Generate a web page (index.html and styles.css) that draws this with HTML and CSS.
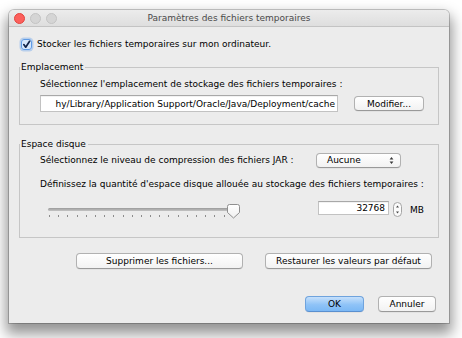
FILE: index.html
```html
<!DOCTYPE html>
<html lang="fr">
<head>
	<meta charset="utf-8">
	<title>Paramètres des fichiers temporaires</title>
	<link rel="stylesheet" href="styles.css">
</head>
<body>

	<div class="window">
		<div class="titlebar">
			<div class="lights">
				<span class="light close"></span>
				<span class="light"></span>
				<span class="light"></span>
			</div>
			<div class="title">Paramètres des fichiers temporaires</div>
			<div></div>
		</div>

		<div class="content">
			<label class="check-row">
				<span class="checkbox">
					<svg width="11" height="11" viewBox="0 0 11 11">
						<rect x="0.5" y="0.5" width="10" height="10" rx="2.5" fill="#d6e7fc" stroke="#5f9be6"/>
						<path d="M2.8 5.6 L4.7 8.2 L8.6 2.3" fill="none" stroke="#12244a" stroke-width="1.7" stroke-linecap="round" stroke-linejoin="round"/>
					</svg>
				</span>
				Stocker les fichiers temporaires sur mon ordinateur.
			</label>

			<fieldset class="group group-location">
				<legend>Emplacement</legend>
				<div class="group-body">
					<div class="text-line">Sélectionnez l'emplacement de stockage des fichiers temporaires :</div>
					<div class="path-row">
						<div class="field path"><span>hy/Library/Application Support/Oracle/Java/Deployment/cache</span></div>
						<div class="btn btn-modify">Modifier...</div>
					</div>
				</div>
			</fieldset>

			<fieldset class="group group-disk">
				<legend>Espace disque</legend>
				<div class="group-body">
					<div class="compress-row">
						<span>Sélectionnez le niveau de compression des fichiers JAR :</span>
						<div class="btn popup">
							<span class="popup-label">Aucune</span>
							<svg width="5" height="9" viewBox="0 0 5 9">
								<path d="M0.6 3.4 L2.5 1 L4.4 3.4 Z M0.6 5.6 L2.5 8 L4.4 5.6 Z" fill="#3a3a3a"/>
							</svg>
						</div>
					</div>
					<div class="text-line space-line">Définissez la quantité d'espace disque allouée au stockage des fichiers temporaires :</div>
					<div class="slider-row">
						<div class="slider">
							<div class="track"></div>
							<div class="ticks">
								<i></i><i></i><i></i><i></i><i></i><i></i><i></i>
								<i></i><i></i><i></i><i></i><i></i><i></i><i></i>
								<i></i><i></i><i></i><i></i><i></i><i></i><i></i>
							</div>
							<svg class="thumb" width="13" height="15" viewBox="0 0 13 15">
								<defs>
									<linearGradient id="thumbfill" x1="0" y1="0" x2="0" y2="1">
										<stop offset="0" stop-color="#ffffff"/>
										<stop offset="1" stop-color="#f0f0f0"/>
									</linearGradient>
								</defs>
								<path d="M2.5 0.5 H10.5 Q12.5 0.5 12.5 2.5 V8.5 L6.5 14 L0.5 8.5 V2.5 Q0.5 0.5 2.5 0.5 Z" fill="url(#thumbfill)" stroke="#8f8f8f"/>
							</svg>
						</div>
						<div class="field number">32768</div>
						<div class="stepper">
							<svg width="9" height="15" viewBox="0 0 9 15">
								<rect x="0.5" y="0.5" width="8" height="14" rx="4" fill="#fbfbfb" stroke="#a4a4a4"/>
								<path d="M3 5.6 L4.5 3.6 L6 5.6 Z M3 9.4 L4.5 11.4 L6 9.4 Z" fill="#4a4a4a"/>
							</svg>
						</div>
						<span class="unit">MB</span>
					</div>
				</div>
			</fieldset>

			<div class="actions">
				<div class="btn btn-wide">Supprimer les fichiers...</div>
				<div class="btn btn-wide">Restaurer les valeurs par défaut</div>
			</div>

			<div class="dialog-buttons">
				<div class="btn btn-ok">OK</div>
				<div class="btn btn-cancel">Annuler</div>
			</div>
		</div>
	</div>

</body>
</html>
```

FILE: styles.css
```css
html {
	background: #ffffff;
}

body {
	margin: 0;
	min-height: 338px;
	font-family: "DejaVu Sans", sans-serif;
	font-size: 9px;
	color: #000000;
}

.window {
	margin: 10px 0 0 9px;
	width: 440px;
	height: 313px;
	background: #ececec;
	border-radius: 5px 5px 0 0;
	box-shadow: 0 0 0 1px rgba(0, 0, 0, 0.2), 0 8px 14px 3px rgba(0, 0, 0, 0.42);
	overflow: hidden;
}

.titlebar {
	height: 16px;
	padding: 0 5px;
	display: grid;
	grid-template-columns: 1fr auto 1fr;
	align-items: center;
	background: linear-gradient(#ececec, #dedede);
	border-bottom: 1px solid #c3c3c3;
}

.lights {
	display: flex;
	gap: 5px;
}

.light {
	width: 9px;
	height: 9px;
	border-radius: 50%;
	background: #d5d5d5;
	border: 0.5px solid #c3c3c3;
}

.light.close {
	background: #fc605c;
	border-color: #e1453f;
}

.title {
	color: #4a4a4a;
	line-height: 16px;
}

.content {
	padding: 11px 10px 0;
}

.check-row {
	height: 12px;
	margin-left: 2px;
	display: flex;
	align-items: center;
	gap: 5px;
}

.checkbox {
	width: 11px;
	height: 11px;
	border-radius: 3px;
	box-shadow: 0 0 0 1.5px rgba(120, 170, 235, 0.45);
}

.checkbox svg {
	display: block;
}

.group {
	margin: 12px 0 0;
	padding: 0;
	border: 1px solid #c6c6c6;
	min-width: 0;
}

.group legend {
	margin-left: 0;
	padding: 0 2px 0 1px;
	line-height: 10px;
}

.group-body {
	padding: 6px 14px 12px 20px;
}

.group-disk {
	margin-top: 14px;
}

.group-disk .group-body {
	padding-top: 3px;
	padding-bottom: 18px;
}

.text-line {
	line-height: 12px;
}

.path-row {
	margin-top: 5px;
	height: 17px;
	display: flex;
	align-items: center;
}

.field {
	box-sizing: border-box;
	background: #ffffff;
	border: 1px solid #c2c2c2;
	border-top-color: #a8a8a8;
	box-shadow: inset 0 1px 0 rgba(0, 0, 0, 0.05);
}

.path {
	width: 298px;
	height: 17px;
	padding: 0 2px;
	display: flex;
	justify-content: flex-end;
	align-items: center;
	overflow: hidden;
	white-space: nowrap;
}

.btn {
	box-sizing: border-box;
	height: 15px;
	display: flex;
	align-items: center;
	justify-content: center;
	background: linear-gradient(#ffffff, #f2f2f2);
	border: 1px solid #b1b1b1;
	border-bottom-color: #999999;
	border-radius: 4px;
	box-shadow: 0 0.5px 0.5px rgba(0, 0, 0, 0.08);
	white-space: nowrap;
}

.btn-modify {
	width: 70px;
	margin-left: 16px;
}

.compress-row {
	height: 16px;
	display: flex;
	align-items: center;
}

.popup {
	width: 85px;
	margin-left: auto;
	margin-right: 23px;
	padding: 0 6px 0 10px;
	justify-content: space-between;
}

.space-line {
	margin-top: 10px;
}

.slider-row {
	margin-top: 10px;
	height: 19px;
	display: flex;
	align-items: flex-start;
}

.slider {
	position: relative;
	width: 194px;
	height: 19px;
	margin-left: 6px;
}

.track {
	margin: 8px 0 0 2px;
	width: 188px;
	height: 3px;
	border-radius: 2px;
	background: linear-gradient(#9a9a9a, #c4c4c4);
}

.ticks {
	margin: 4px 0 0 3px;
	width: 185px;
	height: 2px;
	display: flex;
	justify-content: space-between;
}

.ticks i {
	width: 1px;
	height: 2px;
	background: #8c8c8c;
}

.thumb {
	position: absolute;
	left: 181px;
	top: 4px;
}

.number {
	width: 72px;
	height: 14px;
	margin: 1px 0 0 79px;
	padding: 0 3px;
	text-align: right;
	line-height: 12px;
}

.stepper {
	margin: 2px 0 0 4px;
	height: 15px;
}

.stepper svg {
	display: block;
}

.unit {
	margin-left: 8px;
	margin-top: 4px;
	line-height: 12px;
}

.actions {
	margin: 15px 0 0 57px;
	display: flex;
	gap: 22px;
}

.btn-wide {
	width: 167px;
	height: 16px;
}

.dialog-buttons {
	margin: 27px 3px 0 0;
	display: flex;
	justify-content: flex-end;
	gap: 14px;
}

.btn-ok {
	width: 59px;
	height: 16px;
	background: linear-gradient(#c6e0fb, #8fc3f7 55%, #7bb8f5);
	border-color: #6fa3dd;
	border-bottom-color: #5a8fcf;
}

.btn-cancel {
	width: 58px;
	height: 16px;
}
```
